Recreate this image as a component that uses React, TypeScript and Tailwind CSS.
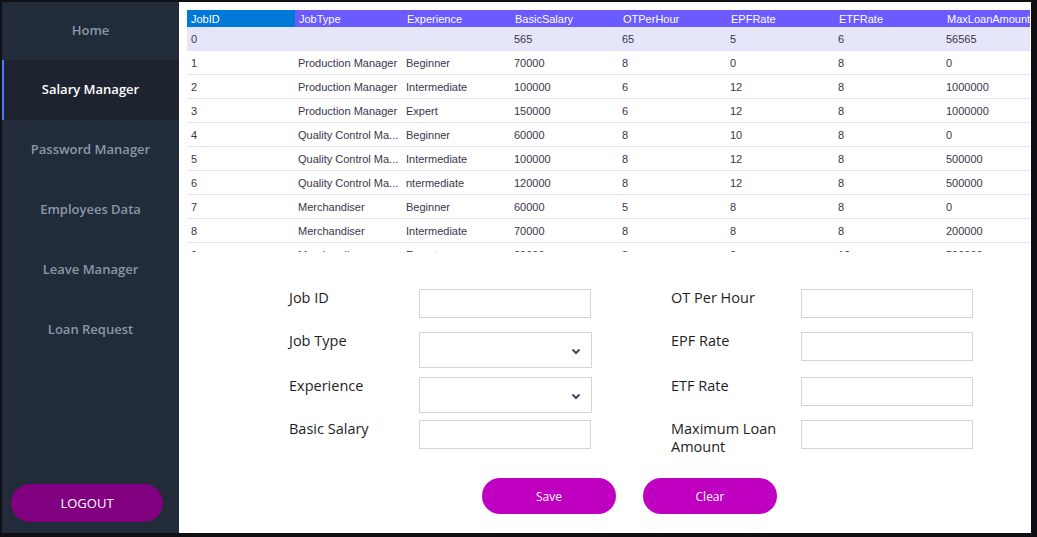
import React from "react";

const cols = ["JobID", "JobType", "Experience", "BasicSalary", "OTPerHour", "EPFRate", "ETFRate", "MaxLoanAmount"];
const rows: string[][] = [
  ["0", "", "", "565", "65", "5", "6", "56565"],
  ["1", "Production Manager", "Beginner", "70000", "8", "0", "8", "0"],
  ["2", "Production Manager", "Intermediate", "100000", "6", "12", "8", "1000000"],
  ["3", "Production Manager", "Expert", "150000", "6", "12", "8", "1000000"],
  ["4", "Quality Control Ma...", "Beginner", "60000", "8", "10", "8", "0"],
  ["5", "Quality Control Ma...", "Intermediate", "100000", "8", "12", "8", "500000"],
  ["6", "Quality Control Ma...", "ntermediate", "120000", "8", "12", "8", "500000"],
  ["7", "Merchandiser", "Beginner", "60000", "5", "8", "8", "0"],
  ["8", "Merchandiser", "Intermediate", "70000", "8", "8", "8", "200000"],
  ["9", "Merchandiser", "Expert", "80000", "8", "8", "12", "500000"],
];

const nav = ["Home", "Salary Manager", "Password Manager", "Employees Data", "Leave Manager", "Loan Request"];

function Chevron() {
  return (
    <svg width="10" height="7" viewBox="0 0 10 7" className="mr-[10px] mt-[2px]">
      <path d="M1.5 1.5 L5 5 L8.5 1.5" stroke="#3f4a5a" strokeWidth="2" fill="none" />
    </svg>
  );
}

function Field({ label, select, h }: { label: string; select?: boolean; h: number }) {
  return (
    <div className="flex items-start" style={{ height: h }}>
      <div className="w-[130px] text-[14.5px] leading-[18px] text-[#1e1e1e]">{label}</div>
      {select ? (
        <div className="w-[173px] h-[36px] border border-[#d4d4d4] flex items-center justify-end">
          <Chevron />
        </div>
      ) : (
        <div className="w-[172px] h-[29px] border border-[#d4d4d4]" />
      )}
    </div>
  );
}

export default function App() {
  return (
    <div className="w-[1037px] h-[537px] bg-[#101014] overflow-hidden" style={{ fontFamily: "'Open Sans', 'Noto Sans', sans-serif" }}>
      <div className="flex h-[531px] mt-[2px] ml-[2px] w-[1029px]">
        {/* Sidebar */}
        <div className="w-[177px] h-full bg-[#222b3a] flex flex-col">
          {nav.map((n, i) => (
            <div
              key={n}
              className={
                "flex items-center justify-center text-[13px] font-semibold " +
                (i === 1
                  ? "bg-[#1e242f] text-white border-l-2 border-[#4a7cff] pr-[2px] h-[60px]"
                  : i === 0
                  ? "text-[#8b97a8] h-[58px]"
                  : "text-[#8b97a8] h-[60px]")
              }
            >
              {n}
            </div>
          ))}
          <div className="flex-1" />
          <div className="px-[9px] pb-[11px]">
            <div className="w-[152px] h-[38px] rounded-full bg-[#800080] text-white text-[13px] flex items-center justify-center pt-[2px]">
              LOGOUT
            </div>
          </div>
        </div>
        {/* Main */}
        <div className="w-[852px] h-full bg-white flex flex-col">
          <div className="mt-[8px] ml-[8px] w-[843px] h-[242px] overflow-hidden" style={{ fontFamily: "'Liberation Sans', Arial, sans-serif" }}>
            <div className="flex h-[17px] bg-[#6a5aff] text-white text-[11px]">
              {cols.map((c, i) => (
                <div key={c} className={"w-[108px] shrink-0 pl-[4px] leading-[18px] whitespace-nowrap " + (i === 0 ? "bg-[#0078d7]" : "")}>
                  {c}
                </div>
              ))}
            </div>
            {rows.map((r, ri) => (
              <div
                key={ri}
                className={"flex h-[24px] text-[11px] text-[#3a3548] border-b border-[#e3e0fb] " + (ri === 0 ? "bg-[#e6e6fa]" : "bg-white")}
              >
                {r.map((v, ci) => (
                  <div key={ci} className={"w-[108px] shrink-0 leading-[25px] whitespace-nowrap " + (ci === 0 ? "pl-[4px]" : "pl-[3px]")}>
                    {v}
                  </div>
                ))}
              </div>
            ))}
          </div>
          {/* Form */}
          <div className="flex ml-[110px] mt-[37px]">
            <div className="flex flex-col">
              <Field label="Job ID" h={43} />
              <Field label="Job Type" select h={45} />
              <Field label="Experience" select h={43} />
              <Field label="Basic Salary" h={40} />
            </div>
            <div className="flex flex-col ml-[79px]">
              <Field label="OT Per Hour" h={43} />
              <Field label="EPF Rate" h={45} />
              <Field label="ETF Rate" h={43} />
              <Field label="Maximum Loan Amount" h={40} />
            </div>
          </div>
          <div className="flex ml-[303px] mt-[18px] gap-[27px]">
            <div className="w-[134px] h-[36px] rounded-full bg-[#c000c0] text-white text-[12px] flex items-center justify-center pt-[2px]">Save</div>
            <div className="w-[134px] h-[36px] rounded-full bg-[#c000c0] text-white text-[12px] flex items-center justify-center pt-[2px]">Clear</div>
          </div>
        </div>
      </div>
    </div>
  );
}
